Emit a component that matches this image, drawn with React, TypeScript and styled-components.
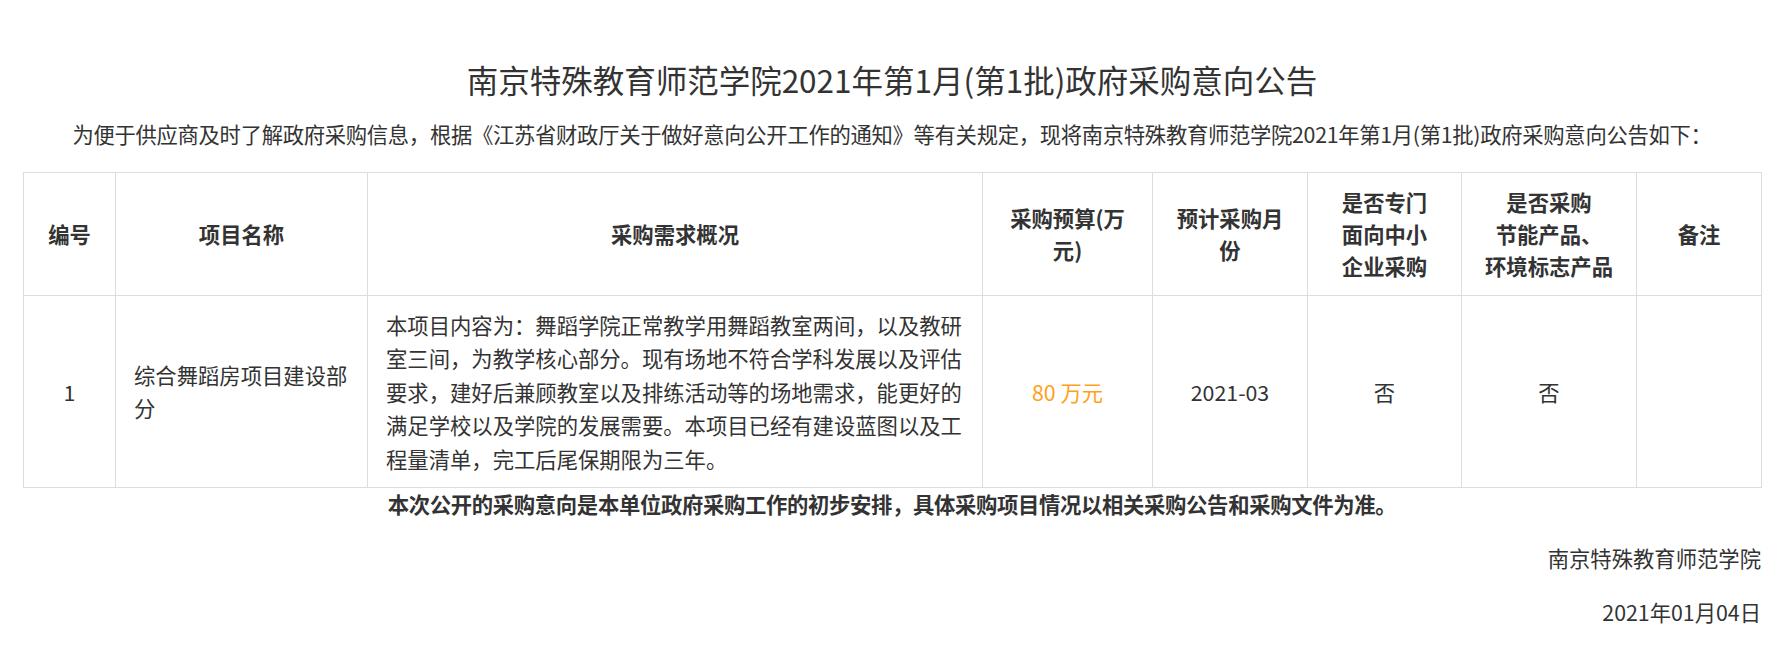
import React from "react";
import styled, { createGlobalStyle } from "styled-components";

const GlobalStyle = createGlobalStyle`
  html, body {
    margin: 0;
    padding: 0;
    background: #ffffff;
  }
  body {
    font-family: "Noto Sans CJK SC", "Noto Sans", "Liberation Sans", sans-serif;
    color: #333333;
  }
`;

const Page = styled.div`
  padding: 0 22px 0 23px;
  box-sizing: border-box;
  width: 1783px;
`;

const Title = styled.h1`
  margin: 56px 0 0;
  font-size: 31.5px;
  line-height: 47px;
  font-weight: 400;
  text-align: center;
  color: #333333;
`;

const Intro = styled.p`
  margin: 14px 0 0;
  font-size: 21.33px;
  line-height: 33.5px;
  letter-spacing: -0.3px;
  text-align: center;
`;

const Table = styled.table`
  margin-top: 21px;
  width: 1738px;
  border-collapse: collapse;
  table-layout: fixed;
  font-size: 21.33px;
`;

const HeadCell = styled.th`
  border: 1px solid #dddddd;
  padding: 13px 10px;
  font-weight: 700;
  line-height: 32px;
  text-align: center;
  vertical-align: middle;
  color: #333333;
`;

const Cell = styled.td<{ $align?: "left" | "center"; $tone?: "accent" }>`
  border: 1px solid #dddddd;
  padding: 12px 18px;
  line-height: 33.5px;
  text-align: ${(p) => p.$align ?? "center"};
  vertical-align: middle;
  color: ${(p) => (p.$tone === "accent" ? "#ff9f1a" : "#333333")};
  word-break: break-all;
`;

const Note = styled.p`
  margin: -1px 0 0;
  font-size: 21.33px;
  line-height: 33.5px;
  letter-spacing: -0.32px;
  font-weight: 700;
  text-align: center;
`;

const Sign = styled.p<{ $gap: number }>`
  margin: ${(p) => p.$gap}px 0 0;
  font-size: 21.33px;
  line-height: 33.5px;
  text-align: right;
`;

const columns = [92, 252, 615, 170, 155, 154, 175, 125];

export default function App() {
  return (
    <>
      <GlobalStyle />
      <Page>
        <Title>南京特殊教育师范学院2021年第1月(第1批)政府采购意向公告</Title>
        <Intro>
          为便于供应商及时了解政府采购信息，根据《江苏省财政厅关于做好意向公开工作的通知》等有关规定，现将南京特殊教育师范学院2021年第1月(第1批)政府采购意向公告如下：
        </Intro>
        <Table>
          <colgroup>
            {columns.map((w, i) => (
              <col key={i} style={{ width: w }} />
            ))}
          </colgroup>
          <thead>
            <tr>
              <HeadCell>编号</HeadCell>
              <HeadCell>项目名称</HeadCell>
              <HeadCell>采购需求概况</HeadCell>
              <HeadCell>
                采购预算(万
                <br />
                元)
              </HeadCell>
              <HeadCell>
                预计采购月
                <br />份
              </HeadCell>
              <HeadCell>
                是否专门
                <br />
                面向中小
                <br />
                企业采购
              </HeadCell>
              <HeadCell>
                是否采购
                <br />
                节能产品、
                <br />
                环境标志产品
              </HeadCell>
              <HeadCell>备注</HeadCell>
            </tr>
          </thead>
          <tbody>
            <tr>
              <Cell>1</Cell>
              <Cell $align="left">综合舞蹈房项目建设部分</Cell>
              <Cell $align="left">
                本项目内容为：舞蹈学院正常教学用舞蹈教室两间，以及教研室三间，为教学核心部分。现有场地不符合学科发展以及评估要求，建好后兼顾教室以及排练活动等的场地需求，能更好的满足学校以及学院的发展需要。本项目已经有建设蓝图以及工程量清单，完工后尾保期限为三年。
              </Cell>
              <Cell $tone="accent">80 万元</Cell>
              <Cell>2021-03</Cell>
              <Cell>否</Cell>
              <Cell>否</Cell>
              <Cell></Cell>
            </tr>
          </tbody>
        </Table>
        <Note>
          本次公开的采购意向是本单位政府采购工作的初步安排，具体采购项目情况以相关采购公告和采购文件为准。
        </Note>
        <Sign $gap={20}>南京特殊教育师范学院</Sign>
        <Sign $gap={21}>2021年01月04日</Sign>
      </Page>
    </>
  );
}
